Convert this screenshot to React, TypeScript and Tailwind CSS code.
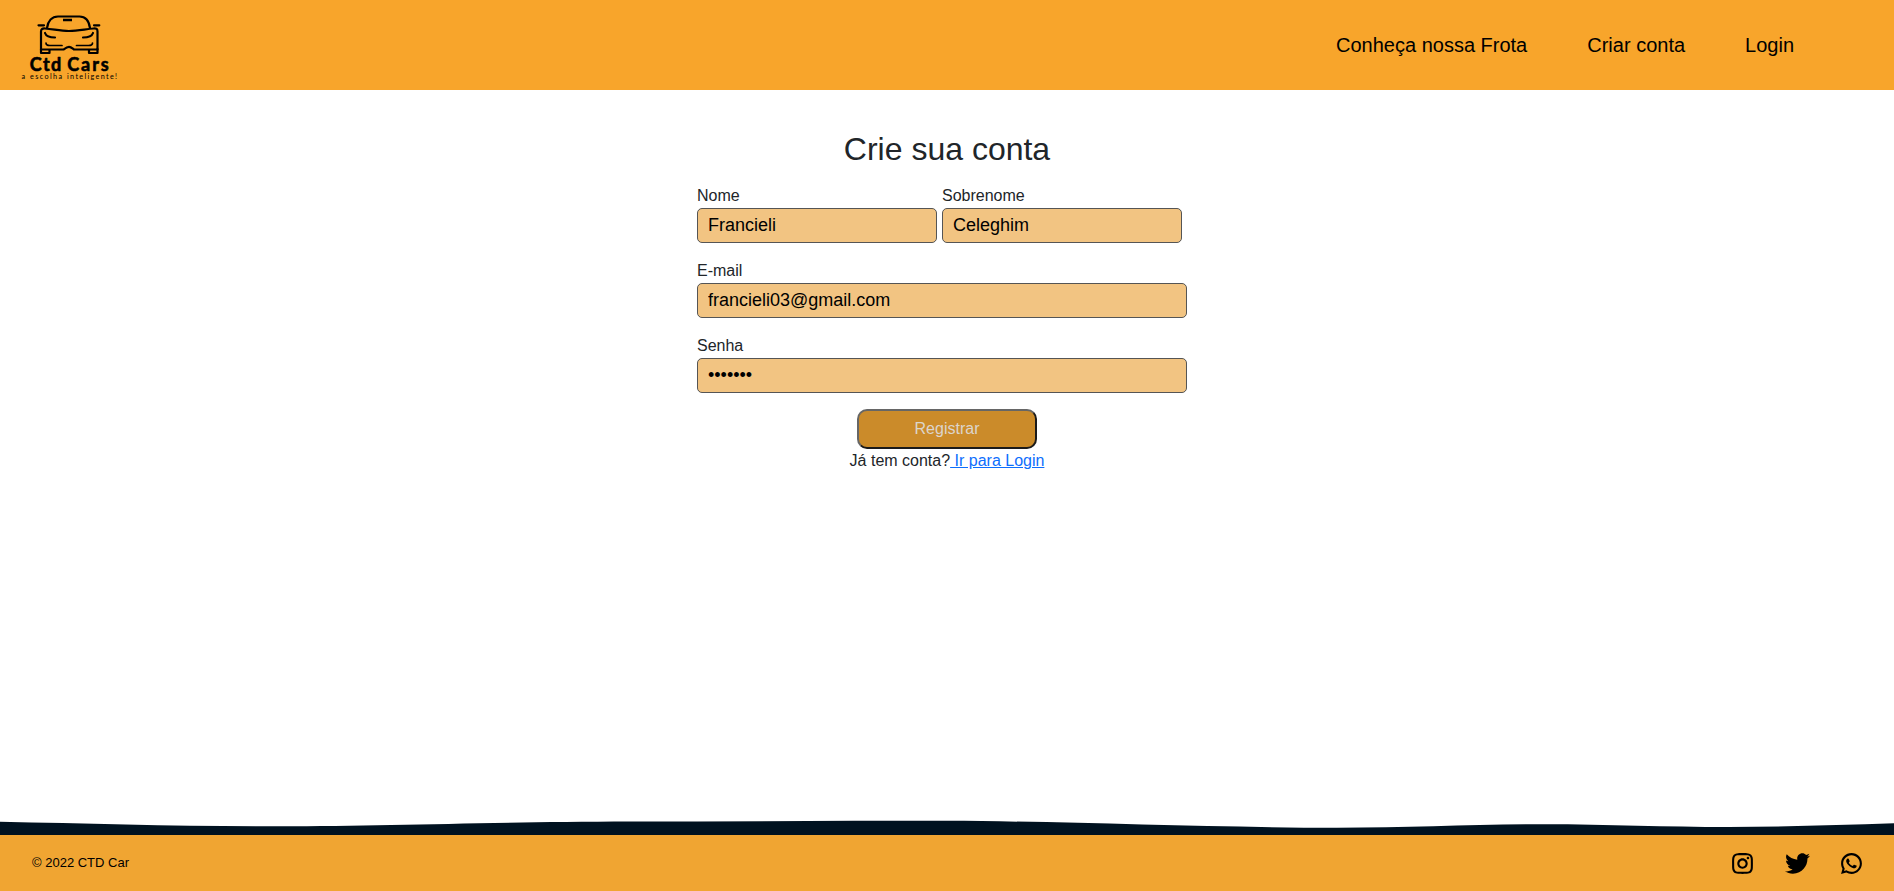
import { FaTwitter } from "react-icons/fa";
import { RiInstagramLine, RiWhatsappLine } from "react-icons/ri";

const labelClass = "flex flex-col text-base leading-6 text-[#212529]";
const inputClass =
  "h-[35px] rounded-[5px] border border-[#555555] bg-[#f2c482] px-2.5 text-lg text-black outline-none";

function Logo() {
  return (
    <svg className="h-[90px] w-[140px]" viewBox="0 0 140 90" fill="none" stroke="#000" strokeWidth="2.2" strokeLinecap="round" strokeLinejoin="round">
      <path d="M47 28C48 21 52 16.500 58 16.500H79.500C85.500 16.500 89 21 90 28" />
      <path d="M41 49.500V31.500C41 29 42.500 28.300 45 28.500C53 29 60 31 69 31C78 31 86 29 93.500 28.500C96.500 28.300 97.500 29 97.500 31.500V49.500H74C72 48 71 46.800 69 46.800C67 46.800 65.500 48 63.500 49.500Z" />
      <path d="M41 49V53H49.500V50M97.500 49V53H89V50" />
      <path d="M38.500 25.300H44M94 25.300H99.300" />
      <path d="M63 20H72" strokeWidth="2.500" strokeLinecap="butt" />
      <path d="M45 33C46 36 49 37.500 55 37.500M93 33C92 36 89 37.500 83 37.500" />
      <path d="M46 43C46 45 47.500 45.500 50 45.500H62M92.500 43C92.500 45 91 45.500 88.500 45.500H76.500" strokeWidth="1.700" />
      <g fill="#000" fontFamily="Lato, sans-serif">
        <g fontSize="18" fontWeight="700" strokeWidth="0.600" stroke="#000">
          <text x="29.800" y="70.500" textLength="31.500">Ctd</text>
          <text x="67.200" y="70.500" textLength="41.500">Cars</text>
        </g>
        <g fontSize="7.200" stroke="none">
          <text x="21.500" y="79">a</text>
          <text x="30" y="79" textLength="32">escolha</text>
          <text x="67" y="79" textLength="50">inteligente!</text>
        </g>
      </g>
    </svg>
  );
}

export default function App() {
  return (
    <div className="flex h-[891px] flex-col bg-white font-['Liberation_Sans',sans-serif]">
      <header className="flex h-[90px] shrink-0 items-center justify-between bg-[#f8a52b] pr-[100px]">
        <Logo />
        <nav className="flex gap-[60px] text-xl text-black">
          <a href="#frota">Conheça nossa Frota</a>
          <a href="#criar">Criar conta</a>
          <a href="#login">Login</a>
        </nav>
      </header>
      <main className="flex flex-1 flex-col items-center pt-10">
        <h1 className="text-[32px] leading-[38px] text-[#212529]">Crie sua conta</h1>
        <form className="mt-4 flex w-[500px] flex-col items-center" onSubmit={(e) => e.preventDefault()}>
          <div className="flex w-full gap-[5px]">
            <label className={labelClass}>
              Nome
              <input className={inputClass + " w-[240px]"} defaultValue="Francieli" />
            </label>
            <label className={labelClass}>
              Sobrenome
              <input className={inputClass + " w-[240px]"} defaultValue="Celeghim" />
            </label>
          </div>
          <label className={labelClass + " mt-4 w-full"}>
            E-mail
            <input className={inputClass + " w-[490px]"} defaultValue="francieli03@gmail.com" />
          </label>
          <label className={labelClass + " mt-4 w-full"}>
            Senha
            <input type="password" className={inputClass + " w-[490px]"} defaultValue="1234567" />
          </label>
          <button className="mt-4 h-10 w-[180px] rounded-[10px] border-2 border-t-[#666] border-r-[#1a1a1a] border-b-[#1a1a1a] border-l-[#666] bg-[#cb8b2a] text-base text-[#dcd5cc]">
            Registrar
          </button>
        </form>
        <p className="text-base leading-6 text-[#212529]">
          Já tem conta?
          <a href="#login" className="text-[#0d6efd] underline"> Ir para Login</a>
        </p>
      </main>
      <svg className="h-[15px] w-full shrink-0" viewBox="0 0 1894 15" preserveAspectRatio="none">
        <path fill="#001220" d="M0 1.700C90 3.500 180 6.300 278 6.300C390 6.300 480 2 631 1.600C737 1.200 842 0.800 947 0.800C1060 1.200 1210 7.700 1337 7.700C1410 7.700 1475 4.200 1543 4.200C1610 4.200 1665 7 1729 7C1785 7 1840 5 1894 3.300V15H0Z" />
      </svg>
      <footer className="flex h-14 shrink-0 items-center justify-between bg-[#f0a532] pr-[30px] pl-8 text-[13px] text-black">
        <span>© 2022 CTD Car</span>
        <div className="flex items-center gap-[29.5px]">
          <RiInstagramLine size={25} />
          <FaTwitter size={25} />
          <RiWhatsappLine size={25} />
        </div>
      </footer>
    </div>
  );
}
